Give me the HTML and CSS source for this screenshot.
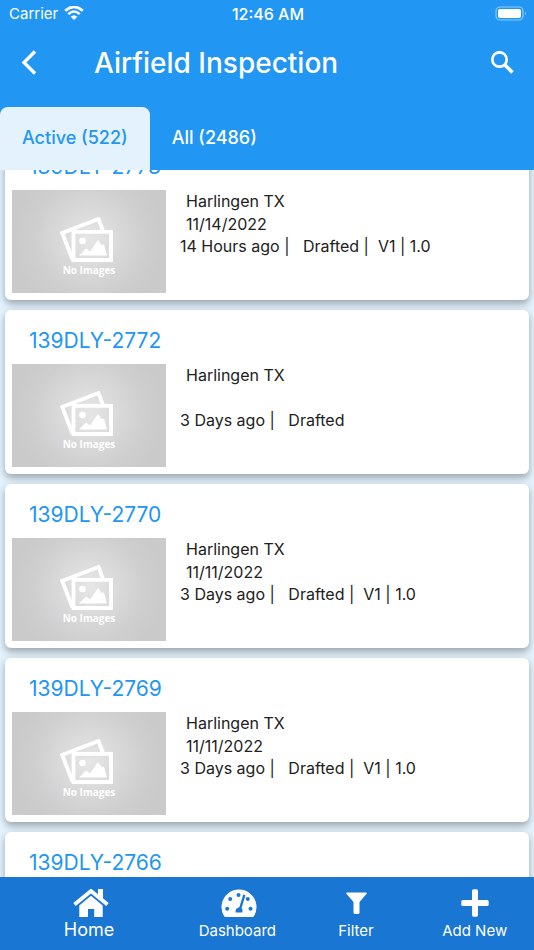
FILE: index.html
```html
<!DOCTYPE html>
<html lang="en">
<head>
<meta charset="utf-8">
<meta name="viewport" content="width=device-width, initial-scale=1">
<title>Airfield Inspection</title>
<link rel="stylesheet" href="styles.css">
</head>
<body>
<svg class="defs" aria-hidden="true">
  <symbol id="photos" viewBox="0 0 54 46">
    <path d="M12.500 42.500 2.200 16 38.500 2 43 14" fill="none" stroke="#fff" stroke-width="3.800"/>
    <path d="M13.500 14.800H51V43H13.500Z" fill="none" stroke="#fff" stroke-width="3.800"/>
    <circle cx="22.500" cy="24" r="3.300" fill="#fff"/>
    <path d="M19 38.500 26 31.500 30 34.500 38 23 41.500 28 44 27.500 47 38.500Z" fill="#fff"/>
  </symbol>
</svg>
<header class="header">
  <div class="status">
    <span class="carrier">Carrier
      <svg width="20" height="15" viewBox="0 0 20 15" fill="none" stroke="#fff" stroke-width="2.600"><path d="M1.200 4.800Q10-3.200 18.800 4.800M4.300 8.100Q10 2.900 15.700 8.100"/><path d="M6.700 10.700Q10 7.700 13.300 10.700L10 14Z" fill="#fff" stroke="none"/></svg>
    </span>
    <span class="clock">12:46 AM</span>
    <svg class="battery" width="32" height="16" viewBox="0 0 32 16"><rect x="1" y="1" width="27" height="13" rx="4" fill="none" stroke="#90caf9" stroke-width="1.200"/><rect x="3" y="3" width="23" height="9" rx="2" fill="#fff"/><path d="M30 5.500Q32 7.500 30 9.500Z" fill="#90caf9"/></svg>
  </div>
  <div class="appbar">
    <button class="icon-button" aria-label="Back"><svg width="18" height="28" viewBox="0 0 18 28"><path d="M16 2.500 5 13.500 16 24.500" fill="none" stroke="#fff" stroke-width="3.400"/></svg></button>
    <h1>Airfield Inspection</h1>
    <button class="icon-button" aria-label="Search"><svg width="24" height="24" viewBox="0 0 24 24" fill="none" stroke="#fff"><circle cx="9.500" cy="8.500" r="7.200" stroke-width="2.700"/><path d="M14.500 13.500 22.500 21.500" stroke-width="3.500"/></svg></button>
  </div>
  <div class="tabs" role="tablist">
    <button class="tab active" role="tab" aria-selected="true">Active (522)</button>
    <button class="tab" role="tab" aria-selected="false">All (2486)</button>
  </div>
</header>
<main class="content">
  <div class="list">
    <article class="card">
      <h2>139DLY-2773</h2>
      <div class="row">
        <div class="thumb"><svg class="photos"><use href="#photos"/></svg><span>No Images</span></div>
        <div class="info"><p>Harlingen TX</p><p>11/14/2022</p><p class="meta">14 Hours ago |&nbsp;&nbsp; Drafted |&nbsp; V1 | 1.0</p></div>
      </div>
    </article>
    <article class="card">
      <h2>139DLY-2772</h2>
      <div class="row">
        <div class="thumb"><svg class="photos"><use href="#photos"/></svg><span>No Images</span></div>
        <div class="info"><p>Harlingen TX</p><p></p><p class="meta">3 Days ago |&nbsp;&nbsp; Drafted</p></div>
      </div>
    </article>
    <article class="card">
      <h2>139DLY-2770</h2>
      <div class="row">
        <div class="thumb"><svg class="photos"><use href="#photos"/></svg><span>No Images</span></div>
        <div class="info"><p>Harlingen TX</p><p>11/11/2022</p><p class="meta">3 Days ago |&nbsp;&nbsp; Drafted |&nbsp; V1 | 1.0</p></div>
      </div>
    </article>
    <article class="card">
      <h2>139DLY-2769</h2>
      <div class="row">
        <div class="thumb"><svg class="photos"><use href="#photos"/></svg><span>No Images</span></div>
        <div class="info"><p>Harlingen TX</p><p>11/11/2022</p><p class="meta">3 Days ago |&nbsp;&nbsp; Drafted |&nbsp; V1 | 1.0</p></div>
      </div>
    </article>
    <article class="card">
      <h2>139DLY-2766</h2>
    </article>
  </div>
</main>
<nav class="nav">
  <button class="nav-item current"><svg width="40" height="28" viewBox="-4 0 40 28"><path d="M1.500 15.500 18 2 34.500 15.500" fill="none" stroke="#fff" stroke-width="3.800"/><path d="M25 0H30V10L25 6Z" fill="#fff"/><path d="M18 6.800 29.700 16.500V28H21.200V20H15V28H6.300V16.500Z" fill="#fff"/></svg>Home</button>
  <button class="nav-item"><svg width="40" height="28" viewBox="-4 0 40 28"><path d="M4.500 28Q3.500 28 3 27A17.500 17.500 0 1 1 33 27Q32.500 28 31.500 28Z" fill="#fff"/><g fill="#1976d2"><circle cx="6.200" cy="19.700" r="2"/><circle cx="9.200" cy="10" r="2"/><circle cx="17.500" cy="6" r="2"/><circle cx="26.800" cy="10" r="2"/><circle cx="29.500" cy="19.700" r="2"/><path d="M22.300 5.500 24.500 6.200 20.600 19Q22.300 21 21.300 23.500H14.600Q14 19 18.300 18.200Z"/></g></svg>Dashboard</button>
  <button class="nav-item"><svg width="36" height="28" viewBox="0 0 36 28"><path d="M9 3.500H28Q29.600 3.500 28.400 5L21.500 13V23.500Q21.500 25 20 25H17Q15.500 25 15.500 23.500V13L8.600 5Q7.400 3.500 9 3.500Z" fill="#fff"/></svg>Filter</button>
  <button class="nav-item"><svg width="36" height="28" viewBox="0 0 36 28" fill="#fff"><rect x="15" y="0.300" width="6" height="27.400" rx="1.600"/><rect x="4.300" y="11" width="27.400" height="6" rx="1.600"/></svg>Add New</button>
</nav>
</body>
</html>
```
FILE: styles.css
```css
* { box-sizing: border-box; }

body {
  display: flex;
  flex-direction: column;
  height: 100vh;
  margin: 0;
  overflow: hidden;
  background: #e3f2fd;
  color: #212121;
  font-family: Inter, "Liberation Sans", sans-serif;
}

h1, h2, p { margin: 0; font-weight: 400; }

button {
  padding: 0;
  border: 0;
  background: none;
  color: inherit;
  font: inherit;
}

svg { display: block; }

.defs { position: absolute; width: 0; height: 0; }

.header {
  position: relative;
  flex: none;
  background: #2196f3;
  color: #fff;
}

.status {
  display: grid;
  grid-template-columns: 1fr auto 1fr;
  align-items: center;
  height: 27px;
  padding: 0 7px 0 9px;
  font-size: 15px;
}

.carrier { display: flex; align-items: center; gap: 6px; }
.clock { font-size: 16px; font-weight: 500; }
.battery { justify-self: end; }

.appbar {
  display: flex;
  align-items: center;
  height: 80px;
  padding: 0 4px 8px 0;
}

.icon-button {
  display: grid;
  place-items: center;
  width: 56px;
  height: 56px;
}

.appbar h1 {
  flex: 1;
  padding-left: 38px;
  font-size: 28px;
  font-weight: 500;
  line-height: 36px;
}

.tabs { display: flex; }

.tab {
  height: 63px;
  padding: 0 22px 2px;
  border-radius: 8px 8px 0 0;
  font-size: 18px;
  font-weight: 500;
  line-height: 24px;
}

.tab.active { background: #e3f2fd; color: #2196f3; }

.content { flex: 1; min-height: 0; overflow: hidden; }

.list {
  display: flex;
  flex-direction: column;
  gap: 10px;
  margin-top: -34px;
  padding: 0 5px;
}

.card {
  min-height: 164px;
  padding: 17px 7px 7px;
  border-radius: 6px;
  background: #fff;
  box-shadow: 0 4px 6px rgba(0, 0, 0, 0.24), 0 2px 12px rgba(0, 0, 0, 0.1);
}

.card h2 {
  padding: 0 17px 9px;
  color: #2196f3;
  font-size: 21px;
  line-height: 28px;
}

.row { display: flex; gap: 14px; }

.thumb {
  display: flex;
  flex-direction: column;
  align-items: center;
  width: 154px;
  height: 103px;
  padding-top: 27px;
  background: radial-gradient(circle at 50% 48%, #e6e6e6 0, #dadada 28px, #cecece 56px, #cacaca 76px);
  color: #fff;
  font: 700 10px/14px "Open Sans", sans-serif;
}

.photos { width: 54px; height: 46px; margin-right: 4px; }

.info { font-size: 16px; line-height: 23px; }
.info p { min-height: 23px; padding-left: 6px; }
.info .meta { padding-left: 0; line-height: 21px; }

.nav {
  position: relative;
  display: flex;
  flex: none;
  height: 73px;
  background: #1976d2;
  color: #fff;
}

.nav-item {
  display: flex;
  flex: 1 1 0;
  flex-direction: column;
  align-items: center;
  padding-top: 12px;
  font-size: 15px;
  line-height: 28px;
}

.nav-item.current { flex-grow: 1.5; font-size: 18px; line-height: 26px; }
```
